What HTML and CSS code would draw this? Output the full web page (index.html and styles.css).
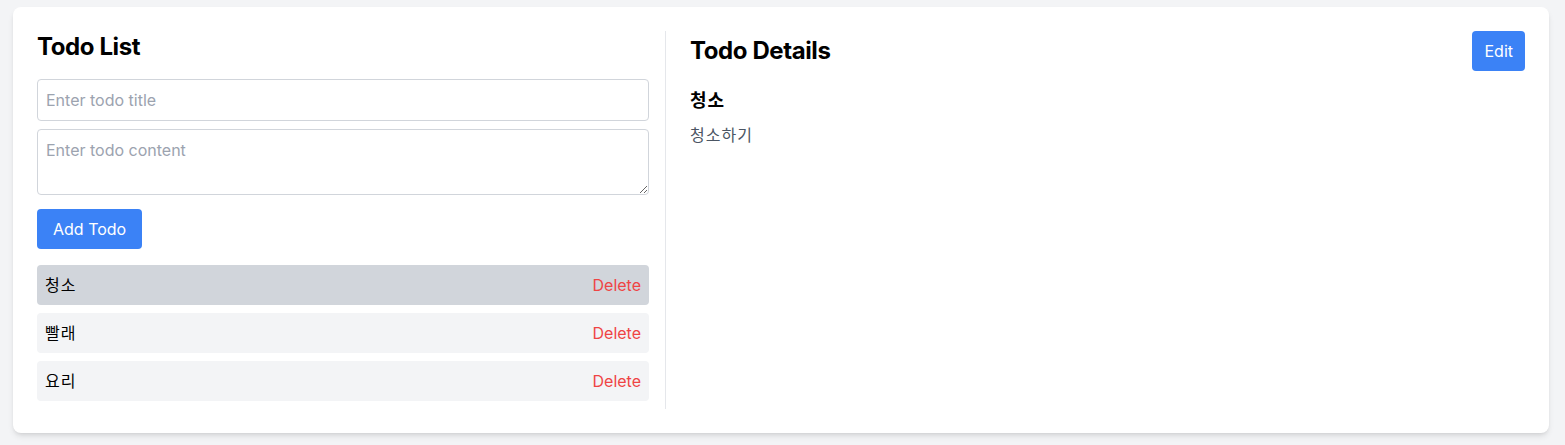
FILE: index.html
```html
<!DOCTYPE html>
<html lang="ko">
<head>
<meta charset="utf-8">
<title>Todo</title>
<link rel="stylesheet" href="styles.css">
</head>
<body>
<div class="card">
  <section class="list-col">
    <h1 class="title">Todo List</h1>
    <input class="field" type="text" placeholder="Enter todo title">
    <textarea class="field area" placeholder="Enter todo content"></textarea>
    <button class="btn add">Add Todo</button>
    <ul class="items">
      <li class="item selected"><span class="ko">청소</span><span class="del">Delete</span></li>
      <li class="item"><span class="ko">빨래</span><span class="del">Delete</span></li>
      <li class="item"><span class="ko">요리</span><span class="del">Delete</span></li>
    </ul>
  </section>
  <section class="detail-col">
    <div class="detail-head">
      <h2 class="title">Todo Details</h2>
      <button class="btn edit">Edit</button>
    </div>
    <h3 class="todo-title ko">청소</h3>
    <p class="todo-body ko">청소하기</p>
  </section>
</div>
</body>
</html>
```

FILE: styles.css
```css
* { box-sizing: border-box; }
html, body { margin: 0; }
body {
  background: #f3f4f6;
  padding: 7px 16px 12px 13px;
  font-family: Inter, "Noto Sans CJK KR", sans-serif;
  color: #000;
}
.card {
  width: 1536px;
  background: #fff;
  border-radius: 8px;
  box-shadow: 0 4px 6px -1px rgba(0,0,0,0.1), 0 2px 4px -2px rgba(0,0,0,0.1);
  padding: 24px;
  display: flex;
}
.list-col {
  width: 628px;
  padding-right: 16px;
  display: flex;
  flex-direction: column;
}
.detail-col {
  flex: 1;
  border-left: 1px solid #e5e7eb;
  padding-left: 24px;
}
.title {
  margin: 0;
  font-size: 24px;
  line-height: 32px;
  font-weight: 700;
  letter-spacing: -0.4px;
}
.list-col .title { margin-bottom: 16px; }
.ko { letter-spacing: 1px; }
.field {
  display: block;
  width: 100%;
  border: 1px solid #d1d5db;
  border-radius: 4px;
  padding: 8px;
  font-family: inherit;
  font-size: 16px;
  line-height: 24px;
  height: 42px;
  margin: 0 0 8px 0;
  color: #000;
  outline: none;
}
.field::placeholder { color: #9ca3af; }
.area {
  height: 66px;
  resize: vertical;
  margin-bottom: 14px;
}
.btn {
  background: #3b82f6;
  color: #fff;
  border: 0;
  border-radius: 4px;
  font-family: inherit;
  font-size: 16px;
  line-height: 24px;
  padding: 8px 16px;
  height: 40px;
  cursor: pointer;
}
.add { align-self: flex-start; margin-bottom: 16px; }
.edit { padding: 8px 12px; }
.items {
  list-style: none;
  margin: 0;
  padding: 0;
}
.item {
  display: flex;
  justify-content: space-between;
  align-items: center;
  height: 40px;
  padding: 0 8px;
  border-radius: 4px;
  background: #f3f4f6;
  margin-bottom: 8px;
  font-size: 16px;
  line-height: 24px;
}
.item.selected { background: #d1d5db; }
.del { color: #ef4444; }
.detail-head {
  display: flex;
  justify-content: space-between;
  align-items: center;
  margin-bottom: 16px;
}
.todo-title {
  margin: 0 0 8px 0;
  font-size: 18px;
  line-height: 28px;
  font-weight: 700;
}
.todo-body {
  margin: 0;
  font-size: 16px;
  line-height: 24px;
  color: #4b5563;
}
```
